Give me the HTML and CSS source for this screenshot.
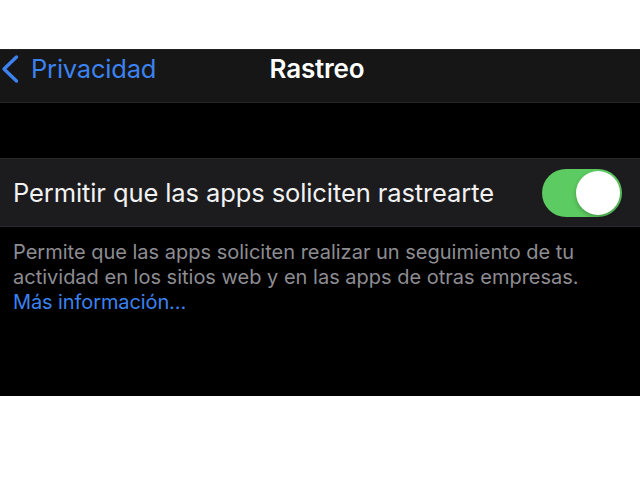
FILE: index.html
```html
<!DOCTYPE html>
<html>
    <head>
        <meta charset="utf-8" />
        <title>Rastreo</title>
        <link rel="stylesheet" href="styles.css">
    </head>
    <body>
        <div class="top_space"></div>
        <div class="screen">
            <div class="nav_bar">
                <a class="back_btn" href="#">
                    <svg class="back_icon" width="18" height="30" viewBox="0 0 18 30">
                        <path d="M15.5 3 L3 15 L15.5 27" fill="none" stroke="#3c82f0" stroke-width="3.4" stroke-linecap="round" stroke-linejoin="round"/>
                    </svg>
                    <span>Privacidad</span>
                </a>
                <h1 class="nav_title">Rastreo</h1>
            </div>
            <div class="group_gap"></div>
            <div class="setting_row">
                <span class="row_label">Permitir que las apps soliciten rastrearte</span>
                <div class="switch is_on">
                    <div class="switch_knob"></div>
                </div>
            </div>
            <p class="footer_txt">
                Permite que las apps soliciten realizar un seguimiento de tu actividad en los sitios web y en las apps de otras empresas.
                <a class="more_link" href="#">Más información...</a>
            </p>
        </div>
    </body>
</html>
```

FILE: styles.css
```css
* {
	padding: 0;
	margin: 0;
	box-sizing: border-box;
}
body {
	background: #fff;
	font-family: Inter, "Noto Sans", sans-serif;
}
.top_space {
	height: 49px;
}
.screen {
	background: #000;
	height: 347px;
}
.nav_bar {
	height: 54px;
	background: #161616;
	border-top: 1px solid #222;
	border-bottom: 1px solid #262626;
	display: flex;
	align-items: flex-start;
	justify-content: center;
	padding-top: 3px;
	position: relative;
}
.back_btn {
	position: absolute;
	left: 1px;
	top: 3px;
	display: flex;
	align-items: center;
	gap: 12px;
	color: #3c82f0;
	text-decoration: none;
	font-size: 25.5px;
	letter-spacing: -0.2px;
}
.nav_title {
	color: #fff;
	font-size: 26px;
	font-weight: 600;
	letter-spacing: -0.2px;
	margin-left: -6px;
}
.group_gap {
	height: 55px;
}
.setting_row {
	height: 69px;
	background: #1c1c1e;
	border-top: 1px solid #2a2a2c;
	border-bottom: 1px solid #2a2a2c;
	display: flex;
	align-items: center;
	justify-content: space-between;
	padding: 0 18px 0 13px;
}
.row_label {
	color: #f2f2f2;
	font-size: 25.5px;
	letter-spacing: -0.1px;
}
.switch {
	width: 80px;
	height: 48px;
	border-radius: 24px;
	background: #5ccb61;
	padding: 2px;
	display: flex;
	justify-content: flex-end;
}
.switch_knob {
	width: 44px;
	height: 44px;
	border-radius: 50%;
	background: #fff;
	box-shadow: 0 2px 4px rgba(0,0,0,0.25);
}
.footer_txt {
	color: #8d8d92;
	font-size: 20px;
	line-height: 25px;
	padding: 13px 20px 0 13px;
}
.more_link {
	display: block;
	color: #3c82f0;
	text-decoration: none;
	letter-spacing: -0.1px;
}
```
